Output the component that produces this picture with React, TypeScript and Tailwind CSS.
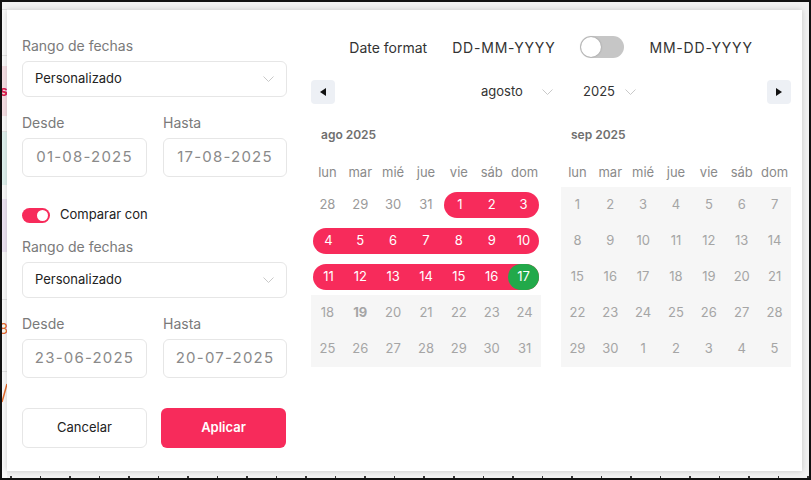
import React from 'react';

type Kind = 'muted' | 'range' | 'end' | 'disabled';
type Cell = { d: number; kind: Kind; start?: boolean; stop?: boolean; bold?: boolean };

const dayNames = ['lun', 'mar', 'mié', 'jue', 'vie', 'sáb', 'dom'];

const aug: Cell[] = [
  { d: 28, kind: 'muted' }, { d: 29, kind: 'muted' }, { d: 30, kind: 'muted' }, { d: 31, kind: 'muted' },
  { d: 1, kind: 'range', start: true }, { d: 2, kind: 'range' }, { d: 3, kind: 'range', stop: true },
  { d: 4, kind: 'range', start: true }, { d: 5, kind: 'range' }, { d: 6, kind: 'range' }, { d: 7, kind: 'range' },
  { d: 8, kind: 'range' }, { d: 9, kind: 'range' }, { d: 10, kind: 'range', stop: true },
  { d: 11, kind: 'range', start: true }, { d: 12, kind: 'range' }, { d: 13, kind: 'range' }, { d: 14, kind: 'range' },
  { d: 15, kind: 'range' }, { d: 16, kind: 'range' }, { d: 17, kind: 'end' },
  ...[18, 19, 20, 21, 22, 23, 24, 25, 26, 27, 28, 29, 30, 31].map((d) => ({ d, kind: 'disabled' as Kind, bold: d === 19 })),
];

const sep: Cell[] = [
  ...Array.from({ length: 30 }, (_, i) => i + 1),
  1, 2, 3, 4, 5,
].map((d) => ({ d, kind: 'disabled' as Kind }));

const Chevron = () => (
  <svg width="11" height="6" viewBox="0 0 11 6" fill="none">
    <polyline points="0.5,0.5 5.5,5.5 10.5,0.5" stroke="#c9c9c9" strokeWidth="1" />
  </svg>
);

const DayCell = ({ c }: { c: Cell }) => {
  if (c.kind === 'disabled') {
    return (
      <div className={`h-9 flex items-center justify-center bg-[#f6f6f6] text-[#a5a5a5] ${c.bold ? 'font-bold text-[#8a8a8a]' : ''}`}>
        {c.d}
      </div>
    );
  }
  if (c.kind === 'muted') {
    return <div className="h-9 flex items-center justify-center text-[#9a9a9a]">{c.d}</div>;
  }
  const round = `${c.start ? 'ml-[2px] rounded-l-full' : ''} ${c.stop || c.kind === 'end' ? 'mr-[2px] rounded-r-full' : ''}`;
  return (
    <div className="h-9 py-[5px]">
      <div className={`relative h-full bg-[#f72b5b] flex items-center justify-center text-white ${round}`}>
        {c.kind === 'end' ? (
          <div className="absolute inset-0 rounded-full bg-[#22a94a] flex items-center justify-center">{c.d}</div>
        ) : (
          c.d
        )}
      </div>
    </div>
  );
};

const Month = ({ title, cells }: { title: string; cells: Cell[] }) => (
  <div className="w-[230px]">
    <div className="pl-[10px] text-[12px] leading-4 font-semibold text-[#6f6f6f]">{title}</div>
    <div className="grid grid-cols-7 mt-[19px] mb-[5px] text-[13px] leading-5 text-[#8a8a8a]">
      {dayNames.map((n) => (
        <div key={n} className="text-center">{n}</div>
      ))}
    </div>
    <div className="grid grid-cols-7 text-[13px]">
      {cells.map((c, i) => (
        <DayCell key={i} c={c} />
      ))}
    </div>
  </div>
);

const Label = ({ children }: { children: React.ReactNode }) => (
  <div className="text-[14px] leading-5 text-[#7a7a7a]">{children}</div>
);

const Select = () => (
  <div className="mt-[5px] h-9 border border-[#e6e6e6] rounded-md flex items-center justify-between pl-3 pr-3 text-[13px] text-[#222]">
    <span>Personalizado</span>
    <Chevron />
  </div>
);

const DateInput = ({ value, w }: { value: string; w: string }) => (
  <div className={`${w} h-[39px] border border-[#e6e6e6] rounded-md flex items-center justify-center text-[15px] tracking-[1.2px] text-[#8a8a8a]`}>
    {value}
  </div>
);

const RangeFields = ({ from, to }: { from: string; to: string }) => (
  <>
    <Label>Rango de fechas</Label>
    <Select />
    <div className="flex mt-4 gap-4">
      <div>
        <Label>Desde</Label>
        <div className="mt-[5px]">
          <DateInput value={from} w="w-[125px]" />
        </div>
      </div>
      <div>
        <Label>Hasta</Label>
        <div className="mt-[5px]">
          <DateInput value={to} w="w-[124px]" />
        </div>
      </div>
    </div>
  </>
);

const NavBtn = ({ dir }: { dir: 'l' | 'r' }) => (
  <div className="w-6 h-6 rounded bg-[#edf0f5] flex items-center justify-center">
    <svg width="6" height="8" viewBox="0 0 6 8">
      {dir === 'l' ? <polygon points="6,0 6,8 0,4" fill="#111" /> : <polygon points="0,0 0,8 6,4" fill="#111" />}
    </svg>
  </div>
);

export default function App() {
  return (
    <div className="relative w-[811px] h-[480px] border-2 border-[#111] bg-[#f1f1f1] overflow-hidden" style={{ fontFamily: 'Inter, "Noto Sans", sans-serif' }}>
      {/* page behind the dialog */}
      <div className="flex flex-col w-[5px] h-full">
        <div className="h-[8px] border-b border-[#dcdcdc]" />
        <div className="h-[46px] bg-[#fafafa] border-b border-[#e3e3e3]" />
        <div className="h-[10px] bg-[#fafafa]" />
        <div className="h-[50px] bg-[#f6dfe4] flex items-center text-[#e0204f] font-bold text-[14px] leading-none -indent-[2px]">s</div>
        <div className="h-[16px] bg-[#fafafa] border-b border-[#e3e3e3]" />
        <div className="h-[53px] bg-[#dff1ee]" />
        <div className="h-[14px] bg-[#fafafa]" />
        <div className="h-[53px] bg-[#ece3f2]" />
        <div className="h-[48px] bg-[#fafafa] border-b border-[#e3e3e3]" />
        <div className="h-[36px] bg-[#fafafa] flex items-end text-[#e76a2a] text-[15px] leading-none -indent-[3px]">8</div>
        <div className="h-[36px] bg-[#fafafa] border-b border-[#e3e3e3]" />
        <div className="h-[40px] bg-[#fafafa] flex items-center">
          <svg width="5" height="24" viewBox="0 0 5 24">
            <line x1="0" y1="22" x2="5" y2="4" stroke="#e76a2a" strokeWidth="1.5" />
          </svg>
        </div>
        <div className="flex-1 bg-[#fafafa]" />
      </div>

      {/* dialog */}
      <div className="absolute left-[5px] top-[8px] w-[795px] h-[461px] bg-white shadow-[0_0_6px_rgba(0,0,0,0.18)] flex pt-[26px] pl-[15px]">
        <div className="w-[265px] flex flex-col">
          <RangeFields from="01-08-2025" to="17-08-2025" />
          <div className="mt-[28px] h-5 flex items-center gap-[10px]">
            <div className="w-[28px] h-[15px] rounded-full bg-[#f72b5b] flex items-center justify-end pr-[2px]">
              <div className="w-[11px] h-[11px] rounded-full bg-white" />
            </div>
            <span className="text-[13px] text-[#222]">Comparar con</span>
          </div>
          <div className="mt-3">
            <RangeFields from="23-06-2025" to="20-07-2025" />
          </div>
          <div className="mt-[30px] flex gap-[14px]">
            <button className="w-[125px] h-10 border border-[#e6e6e6] rounded-md text-[13px] text-[#222] bg-white">Cancelar</button>
            <button className="w-[125px] h-10 rounded-md text-[13px] font-semibold text-white bg-[#f72b5b]">Aplicar</button>
          </div>
        </div>

        <div className="ml-[24px] w-[480px] flex flex-col">
          <div className="h-[22px] flex items-center justify-center gap-[25px] text-[14px] text-[#333]">
            <span>Date format</span>
            <span className="tracking-[0.8px]">DD-MM-YYYY</span>
            <div className="w-[44px] h-[22px] rounded-full bg-[#c6c6c6] flex items-center pl-[1px]">
              <div className="w-5 h-5 rounded-full bg-white shadow-[0_0_2px_rgba(0,0,0,0.3)]" />
            </div>
            <span className="tracking-[0.8px]">MM-DD-YYYY</span>
          </div>

          <div className="mt-[22px] h-6 flex items-center justify-between">
            <NavBtn dir="l" />
            <div className="flex items-center text-[13px] text-[#333] pl-[15px]">
              <div className="w-[72px] flex items-center justify-between">
                <span>agosto</span>
                <Chevron />
              </div>
              <div className="ml-[30px] w-[53px] flex items-center justify-between">
                <span>2025</span>
                <Chevron />
              </div>
            </div>
            <NavBtn dir="r" />
          </div>

          <div className="mt-[23px] flex gap-5">
            <Month title="ago 2025" cells={aug} />
            <Month title="sep 2025" cells={sep} />
          </div>
        </div>
      </div>

      {/* bottom strip of the page */}
      <div className="absolute left-0 right-0 bottom-0 h-[7px] flex items-end gap-[28px] pl-[8px] overflow-hidden">
        {Array.from({ length: 28 }).map((_, i) => (
          <div key={i} className="w-[3px] h-[2px] bg-[#333]" />
        ))}
      </div>
    </div>
  );
}
